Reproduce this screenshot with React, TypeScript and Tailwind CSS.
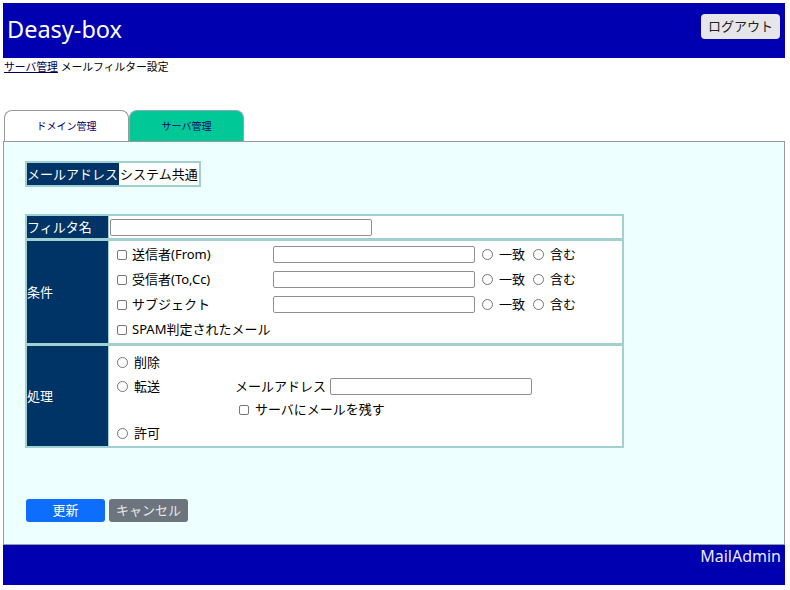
import React from 'react';

const font = "font-['Noto_Sans','Noto_Sans_CJK_JP',sans-serif]";

const Checkbox = () => (
  <input
    type="checkbox"
    className="appearance-none w-[10px] h-[10px] border border-[#767676] rounded-[2px] bg-white shrink-0"
  />
);

const Radio = ({ name }: { name: string }) => (
  <input
    type="radio"
    name={name}
    className="appearance-none w-[11px] h-[11px] border border-[#767676] rounded-full bg-white shrink-0"
  />
);

const TextBox = ({ width }: { width: string }) => (
  <input type="text" className={`${width} h-[17px] border border-[#8f8f8f] rounded-[2px] bg-white`} />
);

const conditions = ['送信者(From)', '受信者(To,Cc)', 'サブジェクト'];

export default function App() {
  return (
    <div className={`${font} pt-[3px] pl-[3px] w-[785px] text-black`}>
      {/* header */}
      <header className="h-[55px] bg-[#0000b0] flex items-center justify-between pl-[4px] pr-[5px]">
        <h1 className="text-[23.5px] leading-none text-white pb-[2px]">Deasy-box</h1>
        <button className="w-[79px] h-[25px] mb-[8px] bg-[#e6e6ea] rounded-[4px] text-[13px] leading-none text-[#222]">
          ログアウト
        </button>
      </header>

      {/* breadcrumb */}
      <div className="text-[10.8px] leading-[15px] mt-[1px] pl-[1px] whitespace-nowrap">
        <a href="#" className="underline text-[#000050]">
          サーバ管理
        </a>{' '}
        メールフィルター設定
      </div>

      {/* tabs */}
      <div className="flex mt-[36px] pl-[1px] h-[31px]">
        <div className="w-[125px] border border-b-0 border-[#999] rounded-t-[8px] bg-white flex items-center justify-center text-[10px] text-[#000066]">
          ドメイン管理
        </div>
        <div className="w-[115px] border border-b-0 border-[#8ab] rounded-t-[8px] bg-[#00c896] flex items-center justify-center text-[10px] text-[#000066]">
          サーバ管理
        </div>
      </div>

      {/* panel */}
      <div className="h-[404px] border border-[#999] bg-[#eeffff] pt-[19px] pl-[21px]">
        <div className="inline-flex border-2 border-[#a0d0d0] text-[13px] leading-[22px] whitespace-nowrap">
          <span className="bg-[#003366] text-white pr-[1px]">メールアドレス</span>
          <span className="bg-white pl-[1px] pr-[1px]">システム共通</span>
        </div>

        {/* filter table */}
        <div className="w-[599px] mt-[27px] border-2 border-[#a0d0d0] bg-[#a0d0d0] flex flex-col gap-[3px] text-[13px] leading-none">
          <div className="flex gap-[1px] h-[22px]">
            <div className="w-[81px] bg-[#003366] text-white flex items-center">フィルタ名</div>
            <div className="flex-1 bg-white flex items-center pl-[1px]">
              <TextBox width="w-[262px]" />
            </div>
          </div>

          <div className="flex gap-[1px] h-[102px]">
            <div className="w-[81px] bg-[#003366] text-white flex items-center">条件</div>
            <div className="flex-1 bg-white pl-[8px] pt-[1px]">
              {conditions.map((label, i) => (
                <div key={label} className="h-[25px] flex items-center">
                  <div className="w-[156px] flex items-center gap-[5px]">
                    <Checkbox />
                    <span>{label}</span>
                  </div>
                  <TextBox width="w-[202px]" />
                  <div className="flex items-center gap-[6px] ml-[7px]">
                    <Radio name={`match${i}`} />
                    <span>一致</span>
                  </div>
                  <div className="flex items-center gap-[6px] ml-[8px]">
                    <Radio name={`match${i}`} />
                    <span>含む</span>
                  </div>
                </div>
              ))}
              <div className="h-[25px] flex items-center gap-[5px]">
                <Checkbox />
                <span>SPAM判定されたメール</span>
              </div>
            </div>
          </div>

          <div className="flex gap-[1px] h-[100px]">
            <div className="w-[81px] bg-[#003366] text-white flex items-center">処理</div>
            <div className="flex-1 bg-white pl-[8px] pt-[4px]">
              <div className="h-[24px] flex items-center gap-[6px]">
                <Radio name="action" />
                <span>削除</span>
              </div>
              <div className="h-[24px] flex items-center">
                <div className="w-[118px] flex items-center gap-[6px]">
                  <Radio name="action" />
                  <span>転送</span>
                </div>
                <span className="mr-[4px]">メールアドレス</span>
                <TextBox width="w-[202px]" />
              </div>
              <div className="h-[23px] flex items-center gap-[6px] pl-[122px]">
                <Checkbox />
                <span>サーバにメールを残す</span>
              </div>
              <div className="h-[24px] flex items-center gap-[6px]">
                <Radio name="action" />
                <span>許可</span>
              </div>
            </div>
          </div>
        </div>

        {/* actions */}
        <div className="flex gap-[4px] mt-[51px] ml-[1px] text-[13px]">
          <button className="w-[79px] h-[23px] rounded-[3px] bg-[#0d6efd] text-white">更新</button>
          <button className="w-[79px] h-[23px] rounded-[3px] bg-[#6c757d] text-[#e8e8e8]">キャンセル</button>
        </div>
      </div>

      {/* footer */}
      <footer className="h-[40px] bg-[#0000b0] text-right pr-[4px] text-[16px] leading-[22px] text-[#e8eaff]">
        MailAdmin
      </footer>
    </div>
  );
}
